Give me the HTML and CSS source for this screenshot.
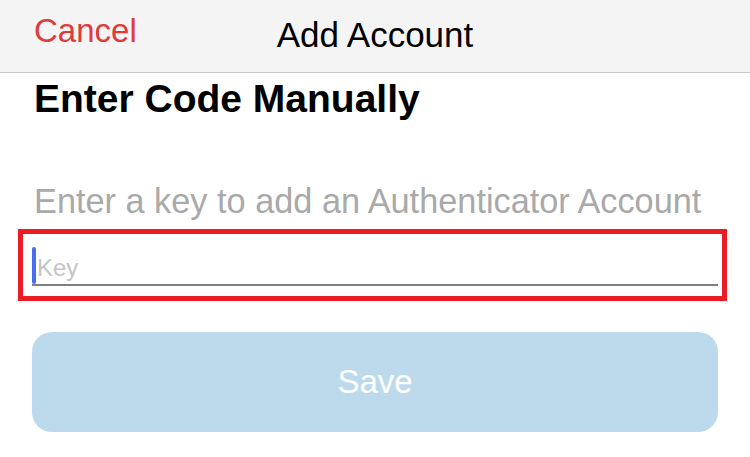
FILE: index.html
```html
<!DOCTYPE html>
<html lang="en">
<head>
  <meta charset="UTF-8">
  <meta name="viewport" content="width=device-width, initial-scale=1.0">
  <title>Add Account</title>

  <link rel="stylesheet" href="styles.css">
</head>
<body>
  <header class="nav-bar">
    <a class="nav-cancel">Cancel</a>
    <h1 class="nav-title">Add Account</h1>
    <span></span>
  </header>

  <main class="content">
    <h2 class="heading">Enter Code Manually</h2>
    <p class="hint">Enter a key to add an Authenticator Account</p>

    <div class="key-box">
      <div class="key-field">
        <span class="caret"></span>
        <span class="placeholder">Key</span>
      </div>
    </div>

    <button class="save-btn" disabled>Save</button>
  </main>
</body>
</html>
```

FILE: styles.css
```css
/* 整体：白底，字体用 Liberation Sans 代替系统字体 */
body {
  margin: 0;
  background: #fff;
  font-family: "Liberation Sans", Arial, sans-serif;
}

/* 顶部导航栏 */
.nav-bar {
  display: grid;
  grid-template-columns: 1fr auto 1fr;
  height: 72px;
  background: #f4f4f4;
  border-bottom: 1px solid #c9c9c9;
}
.nav-cancel {
  justify-self: start;
  padding: 14px 0 0 34px;
  font-size: 33px;
  line-height: 33px;
  color: #e03a3a;
}
.nav-title {
  margin: 0;
  padding-top: 17px;
  font-size: 35px;
  line-height: 35px;
  font-weight: normal;
  color: #000;
}

.content {
  display: flex;
  flex-direction: column;
}

.heading {
  margin: 6px 0 0 34px;
  font-size: 39px;
  line-height: 39px;
  font-weight: bold;
  color: #000;
}

.hint {
  margin: 66px 0 0 34px;
  font-size: 34.3px;
  line-height: 34px;
  color: #a9a9a9;
}

/* 红色边框的输入框区域 */
.key-box {
  box-sizing: border-box;
  margin: 11px 0 0 18px;
  width: 709px;
  border: 5px solid #ec1c24;
  padding: 13px 4px 10px 9px;
}
.key-field {
  display: flex;
  align-items: flex-end;
  height: 37px;
  border-bottom: 2px solid #7f7f7f;
}
.caret {
  width: 4px;
  height: 37px;
  background: #4a6cf0;
  border-radius: 2px;
}
.placeholder {
  margin: 0 0 4px 1px;
  font-size: 24px;
  line-height: 24px;
  color: #c4c4c4;
}

.save-btn {
  margin: 31px 0 0 32px;
  width: 686px;
  height: 100px;
  border: none;
  border-radius: 20px;
  background: #bcdaeb;
  color: #fff;
  font-family: "Liberation Sans", Arial, sans-serif;
  font-size: 33px;
}
```
